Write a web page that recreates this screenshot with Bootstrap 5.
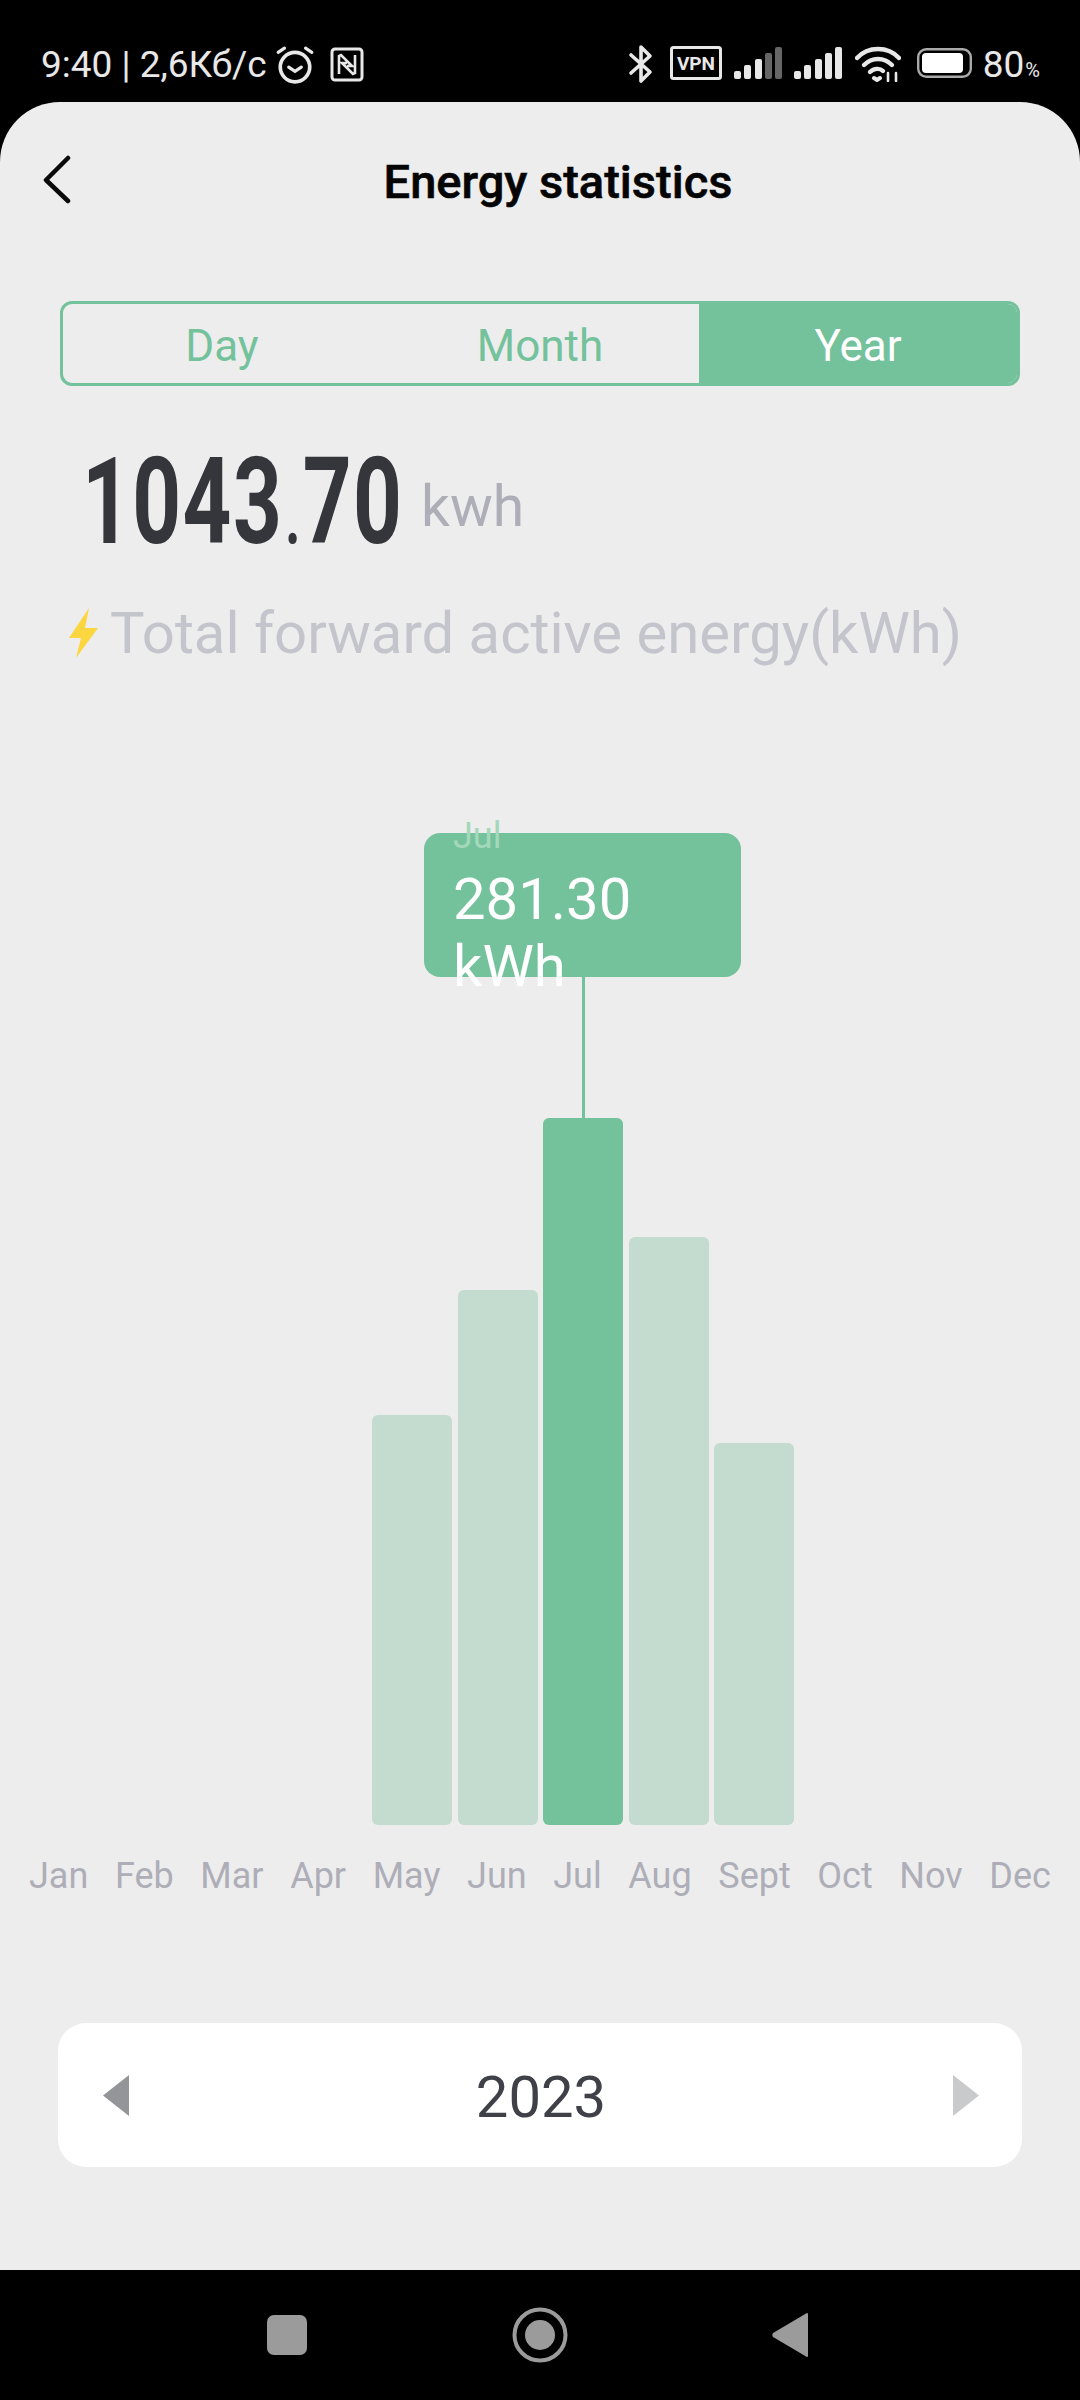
<!DOCTYPE html>
<html lang="en">
<head>
<meta charset="UTF-8" />
<title>Energy statistics</title>
<link href="https://cdn.jsdelivr.net/npm/bootstrap@5.3.0/dist/css/bootstrap.min.css" rel="stylesheet" />
<style>
  html, body { height: 2400px; background: #000; font-family: Roboto, sans-serif; }
  .phone { height: 2400px; width: 1080px; overflow: hidden; }

  .status-bar { height: 102px; padding: 43px 40px 0 41px; color: #e8e8e8; font-size: 37px; line-height: 44px; }
  .status-right svg { display: block; }
  .pct { font-size: 20px; margin: 12px 0 0 1px; line-height: 30px; }

  .screen { height: 2168px; background: #ededed; border-radius: 60px 60px 0 0; position: relative; }
  .top-row { height: 158px; position: relative; }
  .back-btn { position: absolute; left: 42px; top: 52px; }
  .page-title { font-size: 47px; font-weight: 500; color: #050505; margin: 0; padding: 2px 0 0 36px; -webkit-text-stroke: .6px #050505; }

  .range-tabs { margin: 41px 60px 0; height: 85px; border: 3px solid #74c29b; border-radius: 12px; overflow: hidden; }
  .range-tab { flex: 1 1 0; font-size: 44px; color: #74c29b; line-height: 84px; text-align: center; }
  .range-tab.on { background: #74c29b; color: #fff; }

  .total-row { margin: 62px 0 0 82px; height: 120px; align-items: flex-end; }
  .total-num { width: 337px; flex: none; font-size: 120px; line-height: 120px; font-weight: 700; color: #35363c; transform: scaleX(.71); transform-origin: left center; letter-spacing: 2px; white-space: nowrap; }
  .total-num i { font-style: normal; font-weight: 400; font-size: 104px; letter-spacing: 0; }
  .total-unit { font-size: 57px; line-height: 66px; color: #aeaeb8; margin: 0 0 28px 2px; }

  .energy-label { margin: 31px 0 0 69px; font-size: 58px; line-height: 68px; color: #c4c4cc; white-space: nowrap; }
  .energy-label svg { margin-right: 12px; flex: none; }

  .chart { position: absolute; left: 27px; top: 1016px; width: 1027px; height: 707px; }
  .chart-bars { height: 707px; display: grid; grid-template-columns: repeat(12, 1fr); align-items: end; justify-items: center; }
  .chart-bar { width: 80px; background: #c3dccf; border-radius: 6px; }
  .chart-bar.on { background: #74c29b; }

  .tip-box { position: absolute; left: 424px; top: 731px; width: 317px; height: 144px; background: #74c29b; border-radius: 16px; z-index: 2; }
  .tip-month { position: absolute; left: 29px; top: -17px; font-size: 36px; line-height: 40px; color: #a3d8bb; }
  .tip-val { position: absolute; left: 29px; top: 33px; width: 220px; font-size: 58px; line-height: 67px; color: #fff; }
  .tip-stem { position: absolute; left: 582px; top: 875px; width: 3px; height: 141px; background: #74c29b; }

  .month-axis { position: absolute; left: 29px; top: 1753px; width: 1022px; font-size: 36px; line-height: 42px; color: #aeaeb8; }

  .year-card { position: absolute; left: 58px; top: 1921px; width: 964px; height: 144px; background: #fff; border-radius: 28px; padding: 0 43px 0 45px; }
  .year-text { font-size: 58px; line-height: 66px; color: #3f4048; padding-top: 4px; }

  .nav-bar { height: 130px; padding-left: 267px; }
</style>
</head>
<body>
<div class="phone d-flex flex-column">
  <div class="status-bar d-flex justify-content-between">
    <div class="status-left d-flex align-items-start">
      <span>9:40 | 2,6Кб/с</span>
      <svg width="40" height="40" viewBox="0 0 38 38" fill="none" stroke="#e8e8e8" stroke-linecap="round" style="margin:2px 0 0 8px">
        <circle cx="19" cy="21" r="14" stroke-width="3.5"/>
        <path d="M13 21l6 4 6-4" stroke-width="3"/>
        <path d="M3 7l6-4M35 7l-6-4" stroke-width="3"/>
      </svg>
      <svg width="34" height="35" viewBox="0 0 34 35" fill="none" stroke="#e8e8e8" style="margin:4px 0 0 15px">
        <rect x="2" y="2" width="30" height="31" rx="3" stroke-width="3"/>
        <path d="M9 27V9l2-1 11 11h-5M25 8v18l-2 1-11-11h5" stroke-width="2.6"/>
      </svg>
    </div>
    <div class="status-right d-flex align-items-start">
      <svg width="26" height="40" viewBox="0 0 26 40" fill="none" stroke="#e8e8e8" stroke-width="3.6" stroke-linecap="round" stroke-linejoin="round" style="margin-top:1px">
        <path d="M3 11l19 17-9 9V3l9 9L3 29"/>
      </svg>
      <svg class="ms-3" width="52" height="34" viewBox="0 0 52 34" style="margin-top:3px">
        <rect x="1.5" y="1.5" width="49" height="31" rx="2" fill="none" stroke="#e8e8e8" stroke-width="3"/>
        <text x="26" y="24" text-anchor="middle" font-family="Roboto, sans-serif" font-weight="700" font-size="19" fill="#e8e8e8">VPN</text>
      </svg>
      <svg width="48" height="32" viewBox="0 0 48 32" style="margin:4px 0 0 12px">
        <rect x="0" y="24" width="7" height="8" rx="2" fill="#e8e8e8"/>
        <rect x="10" y="18" width="7" height="14" rx="2" fill="#e8e8e8"/>
        <rect x="21" y="12" width="7" height="20" rx="2" fill="#e8e8e8"/>
        <rect x="31" y="6" width="7" height="26" rx="2" fill="#666"/>
        <rect x="41" y="0" width="7" height="32" rx="2" fill="#666"/>
      </svg>
      <svg width="48" height="32" viewBox="0 0 48 32" style="margin:4px 0 0 12px">
        <rect x="0" y="24" width="7" height="8" rx="2" fill="#e8e8e8"/>
        <rect x="10" y="18" width="7" height="14" rx="2" fill="#e8e8e8"/>
        <rect x="21" y="12" width="7" height="20" rx="2" fill="#e8e8e8"/>
        <rect x="31" y="6" width="7" height="26" rx="2" fill="#e8e8e8"/>
        <rect x="41" y="0" width="7" height="32" rx="2" fill="#e8e8e8"/>
      </svg>
      <svg width="46" height="36" viewBox="0 0 46 36" fill="none" stroke="#e8e8e8" stroke-width="4.4" stroke-linecap="round" style="margin:3px 0 0 13px">
        <path d="M2 12C13 0 33 0 44 12"/>
        <path d="M9 19c8-8 20-8 28 0"/>
        <path d="M15 26c4-4 10-4 13-1"/>
        <path d="M19 32l3 2 3-2" stroke-width="4"/>
        <path d="M33 35v-8M41 35v-8" stroke-width="2.6"/>
      </svg>
      <svg width="55" height="30" viewBox="0 0 55 30" style="margin:5px 0 0 16px">
        <rect x="1.2" y="1.2" width="52.6" height="27.6" rx="8" fill="none" stroke="#aaa" stroke-width="2.4"/>
        <rect x="5" y="5" width="41" height="20" rx="4" fill="#fff"/>
      </svg>
      <span style="margin-left:11px">80</span><span class="pct">%</span>
    </div>
  </div>

  <div class="screen">
    <div class="top-row d-flex align-items-center justify-content-center">
      <svg class="back-btn" width="30" height="50" viewBox="0 0 30 50" fill="none" stroke="#0a0a0a" stroke-width="4.5" stroke-linecap="round" stroke-linejoin="round">
        <path d="M26 4L4 26l22 21"/>
      </svg>
      <h1 class="page-title">Energy statistics</h1>
    </div>

    <div class="range-tabs d-flex">
      <div class="range-tab">Day</div>
      <div class="range-tab">Month</div>
      <div class="range-tab on">Year</div>
    </div>

    <div class="total-row d-flex">
      <div class="total-num">1043<i>.</i>70</div>
      <div class="total-unit">kwh</div>
    </div>

    <div class="energy-label d-flex align-items-center">
      <svg width="29" height="50" viewBox="0 0 29 50"><path d="M20 0L0 30h12L7 50l22-30H16z" fill="#fbd63f"/></svg>
      <span>Total forward active energy(kWh)</span>
    </div>

    <div class="chart">
      <div class="chart-bars">
        <div class="chart-bar" style="height:0"></div>
        <div class="chart-bar" style="height:0"></div>
        <div class="chart-bar" style="height:0"></div>
        <div class="chart-bar" style="height:0"></div>
        <div class="chart-bar" style="height:410px"></div>
        <div class="chart-bar" style="height:535px"></div>
        <div class="chart-bar on" style="height:707px"></div>
        <div class="chart-bar" style="height:588px"></div>
        <div class="chart-bar" style="height:382px"></div>
        <div class="chart-bar" style="height:0"></div>
        <div class="chart-bar" style="height:0"></div>
        <div class="chart-bar" style="height:0"></div>
      </div>
    </div>

    <div class="tip-stem"></div>
    <div class="tip-box">
      <div class="tip-month">Jul</div>
      <div class="tip-val">281.30 kWh</div>
    </div>

    <div class="month-axis d-flex justify-content-between">
      <span>Jan</span><span>Feb</span><span>Mar</span><span>Apr</span><span>May</span><span>Jun</span><span>Jul</span><span>Aug</span><span>Sept</span><span>Oct</span><span>Nov</span><span>Dec</span>
    </div>

    <div class="year-card d-flex align-items-center justify-content-between">
      <svg width="26" height="41" viewBox="0 0 26 41"><path d="M26 0v41L0 20.500z" fill="#939598"/></svg>
      <span class="year-text">2023</span>
      <svg width="26" height="41" viewBox="0 0 26 41"><path d="M0 0v41l26-20.500z" fill="#c9cacc"/></svg>
    </div>
  </div>

  <div class="nav-bar d-flex align-items-center">
    <svg width="40" height="40" viewBox="0 0 40 40"><rect width="40" height="40" rx="7" fill="#9b9b9b"/></svg>
    <svg width="56" height="56" viewBox="0 0 56 56" style="margin-left:205px"><circle cx="28" cy="28" r="25.500" fill="none" stroke="#9b9b9b" stroke-width="4"/><circle cx="28" cy="28" r="15" fill="#9b9b9b"/></svg>
    <svg width="38" height="46" viewBox="0 0 38 46" style="margin-left:204px"><path d="M35 2v42L2 24.500a2 2 0 0 1 0-3z" fill="#9b9b9b" stroke="#9b9b9b" stroke-width="2" stroke-linejoin="round"/></svg>
  </div>
</div>
<script src="https://cdn.jsdelivr.net/npm/bootstrap@5.3.0/dist/js/bootstrap.bundle.min.js"></script>
</body>
</html>
